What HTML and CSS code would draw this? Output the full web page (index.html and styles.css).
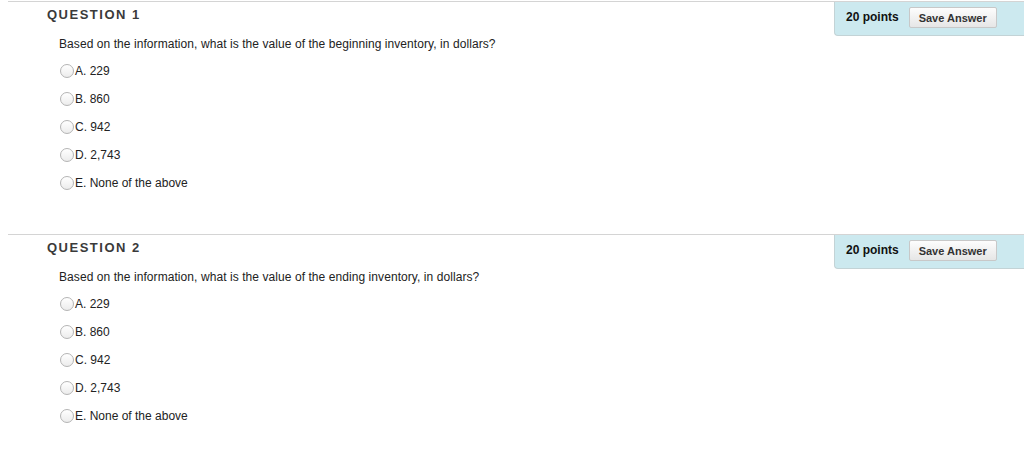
FILE: index.html
```html
<!DOCTYPE html>
<html>
<head>
<meta charset="utf-8">
<link rel="stylesheet" href="styles.css">
</head>
<body>
<div class="question">
  <div class="q-head">
    <h3 class="q-title">QUESTION 1</h3>
    <div class="q-points">
      <span class="pts">20 points</span>
      <button class="save">Save Answer</button>
    </div>
  </div>
  <p class="q-text">Based on the information, what is the value of the beginning inventory, in dollars?</p>
  <ul class="options">
    <li><span class="radio"></span>A. 229</li>
    <li><span class="radio"></span>B. 860</li>
    <li><span class="radio"></span>C. 942</li>
    <li><span class="radio"></span>D. 2,743</li>
    <li><span class="radio"></span>E. None of the above</li>
  </ul>
</div>
<div class="question">
  <div class="q-head">
    <h3 class="q-title">QUESTION 2</h3>
    <div class="q-points">
      <span class="pts">20 points</span>
      <button class="save">Save Answer</button>
    </div>
  </div>
  <p class="q-text">Based on the information, what is the value of the ending inventory, in dollars?</p>
  <ul class="options">
    <li><span class="radio"></span>A. 229</li>
    <li><span class="radio"></span>B. 860</li>
    <li><span class="radio"></span>C. 942</li>
    <li><span class="radio"></span>D. 2,743</li>
    <li><span class="radio"></span>E. None of the above</li>
  </ul>
</div>
</body>
</html>
```
FILE: styles.css
```css
html, body {
  margin: 0;
  padding: 0;
  background: #fff;
}
body {
  font-family: "Liberation Sans", Arial, sans-serif;
  color: #222;
  padding-top: 1px;
}
.question {
  margin-left: 8px;
  border-top: 1px solid #d4d4d4;
  height: 232px;
}
.q-head {
  display: flex;
  justify-content: space-between;
  align-items: flex-start;
}
.q-title {
  margin: 0;
  padding: 5px 0 0 39px;
  font-size: 13px;
  line-height: 15px;
  font-weight: bold;
  letter-spacing: 1.5px;
  color: #3a3a3a;
}
.q-points {
  width: 190px;
  height: 34px;
  box-sizing: border-box;
  background: #cce9ef;
  border-left: 1px solid #c3d3d6;
  border-bottom: 1px solid #c3d3d6;
  border-bottom-left-radius: 4px;
  display: flex;
  align-items: flex-start;
  padding: 5px 0 0 11px;
  gap: 10px;
}
.pts {
  font-size: 12px;
  font-weight: bold;
  color: #111;
  line-height: 16px;
  padding-top: 2px;
}
.save {
  font-family: "Liberation Sans", Arial, sans-serif;
  font-size: 11px;
  font-weight: bold;
  color: #333;
  height: 21px;
  width: 88px;
  padding: 0;
  border: 1px solid #c8c8c8;
  border-radius: 2px;
  background: linear-gradient(#fdfdfd, #e6e6e6);
}
.q-text {
  margin: 1px 0 0 51px;
  font-size: 12px;
  line-height: 15px;
  letter-spacing: 0.07px;
}
.options {
  list-style: none;
  margin: 5px 0 0 52px;
  padding: 0;
}
.options li {
  display: flex;
  align-items: center;
  height: 28px;
  font-size: 12px;
}
.radio {
  width: 12px;
  height: 12px;
  border-radius: 50%;
  border: 1px solid #b4b4b4;
  background: linear-gradient(#fff, #ececec);
  margin-right: 1px;
  flex: none;
}
```
